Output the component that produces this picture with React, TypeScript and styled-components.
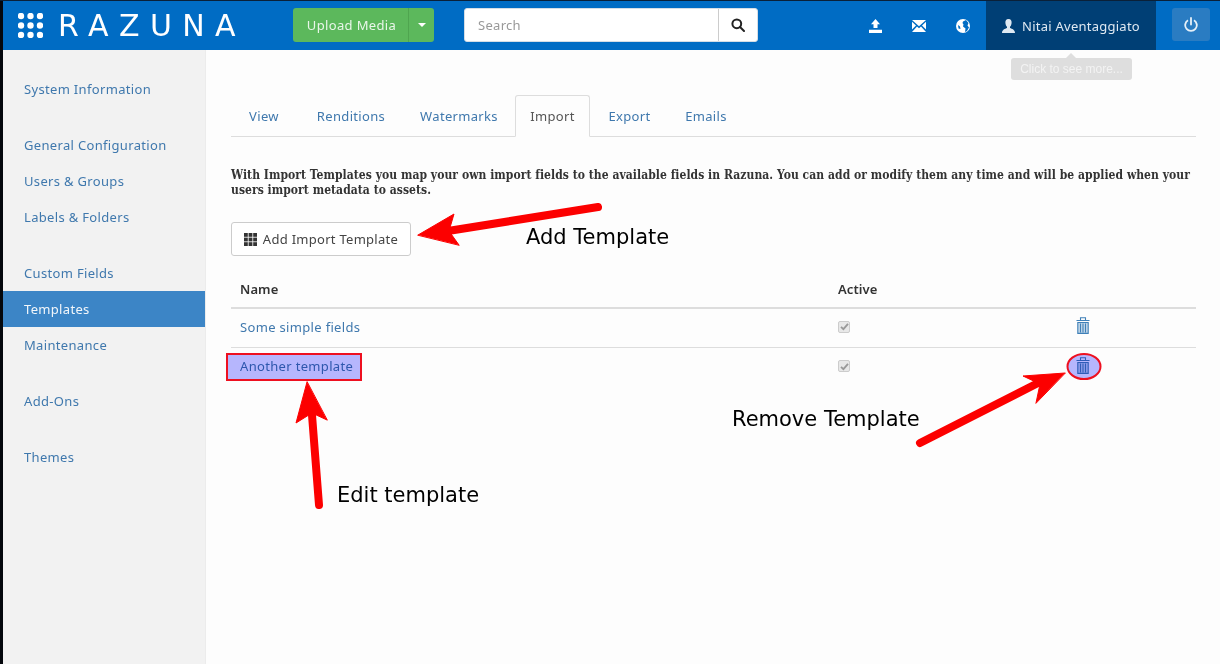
import React from 'react';
import styled, { createGlobalStyle } from 'styled-components';

const Global = createGlobalStyle`
  html, body { margin: 0; padding: 0; background: #000; }
  body { font-family: "Noto Sans", "Open Sans", sans-serif; font-size: 13px; }
  * { box-sizing: border-box; }
`;
const Page = styled.div`
  position: relative; width: 1220px; height: 664px; overflow: hidden;
  display: flex; flex-direction: column; padding-left: 3px; padding-top: 1px;
  background: linear-gradient(#0a2038 1px, #04070c 1px);
`;
const Header = styled.header`
  height: 49px; flex: none; background: #006cc4; display: flex; align-items: flex-start;
`;
const Brand = styled.div`
  width: 290px; height: 49px; display: flex; align-items: center; gap: 15px; padding-left: 15px; flex: none;
`;
const Wordmark = styled.span`
  color: #fff; font-family: "DejaVu Sans", sans-serif; font-size: 30px; font-weight: 400; letter-spacing: 10.4px; line-height: 1;
`;
const UploadGroup = styled.div`
  margin-top: 7px; width: 141px; height: 34px; display: flex; background: #5cb85c; border-radius: 3px; color: #e9f6e9; flex: none;
`;
const UploadLabel = styled.span`
  width: 116px; display: flex; align-items: center; justify-content: center; padding-left: 2px; letter-spacing: .35px; font-size: 13px;
  border-right: 1px solid #4fa54f;
`;
const Caret = styled.span`
  flex: 1; display: flex; align-items: center; justify-content: center;
  &::after { content: ""; border: 4px solid transparent; border-top-color: #fff; border-bottom: 0; }
`;
const Search = styled.div`
  margin: 7px 0 0 30px; width: 294px; height: 34px; background: #fff; border-radius: 3px; border: 1px solid #d5dde5; display: flex; flex: none;
`;
const SearchInput = styled.span`
  flex: 1; padding-left: 13px; color: #999; display: flex; align-items: center; letter-spacing: .3px;
`;
const SearchBtn = styled.span`
  width: 39px; border-left: 1px solid #ccc; display: flex; align-items: center; justify-content: center; color: #222;
`;
const HeaderIcons = styled.div`
  margin-left: 111px; width: 117px; height: 49px; display: flex; align-items: center; color: #fff; gap: 30px; flex: none;
`;
const User = styled.div`
  width: 170px; height: 49px; background: #003f75; color: #dfe9f2; display: flex; align-items: center; justify-content: center; gap: 7px; flex: none;
  font-size: 13px; letter-spacing: .25px;
`;
const PowerBtn = styled.div`
  margin: 7px 0 0 16px; width: 38px; height: 33px; background: #2a7cc2; border-radius: 3px; display: flex; align-items: center; justify-content: center; color: #e6f0f8; flex: none;
`;
const Body = styled.div`
  flex: 1; display: flex; min-height: 0; background: #fdfdfd;
`;
const Sidebar = styled.nav`
  width: 203px; flex: none; background: #f2f2f2; border-right: 1px solid #ececec; padding-top: 21px; display: flex; flex-direction: column; gap: 20px;
`;
const NavGroup = styled.div`display: flex; flex-direction: column;`;
const NavItem = styled.a<{ $active?: boolean }>`
  height: 36px; line-height: 36px; padding-left: 21px; letter-spacing: .33px; font-size: 13px;
  color: ${p => (p.$active ? '#f2f6fa' : '#3f78ad')};
  background: ${p => (p.$active ? '#3c85c6' : 'transparent')};
`;
const Main = styled.main`
  flex: 1; padding: 45px 24px 0 25px; min-width: 0;
`;
const Tabs = styled.div`
  display: flex; height: 42px; border-bottom: 1px solid #ddd; gap: 2px;
`;
const Tab = styled.a<{ $active?: boolean; $w: number }>`
  width: ${p => p.$w}px; height: 42px; text-align: center; line-height: 40px; letter-spacing: .33px; border: 1px solid ${p => (p.$active ? '#ddd' : 'transparent')};
  border-bottom-color: ${p => (p.$active ? '#fdfdfd' : 'transparent')}; border-radius: 3px 3px 0 0;
  color: ${p => (p.$active ? '#555' : '#3f78ad')}; background: ${p => (p.$active ? '#fdfdfd' : 'transparent')};
`;
const Intro = styled.p`
  margin: 31px 0 0; font-family: "DejaVu Serif", serif; font-stretch: condensed; font-weight: 700; font-size: 12px; line-height: 15px; letter-spacing: .05px; color: #333;
`;
const AddButton = styled.button`
  margin-top: 24px; width: 180px; height: 34px; background: #fff; border: 1px solid #ccc; border-radius: 3px; color: #444; font: inherit; font-size: 13px; letter-spacing: .28px;
  display: flex; align-items: center; justify-content: center; gap: 6px; padding: 0;
`;
const Table = styled.div`margin-top: 15px;`;
const Row = styled.div<{ $head?: boolean }>`
  display: grid; grid-template-columns: 598px 238px 1fr; align-items: center; padding-left: 9px;
  height: ${p => (p.$head ? '38px' : '39px')};
  border-bottom: ${p => (p.$head ? '2px solid #ddd' : '1px solid #ddd')};
  padding-bottom: ${p => (p.$head ? '0' : '3px')};
  &:last-child { border-bottom: none; }
`;
const HeadCell = styled.span`font-weight: 600; font-size: 13px; color: #333; letter-spacing: .1px;`;
const NameLink = styled.a`color: #3f78ad; letter-spacing: .33px;`;
const Check = styled.span`
  width: 12px; height: 12px; border: 1px solid #ccc; border-radius: 2px; background: #e8e8e8; display: flex; align-items: center; justify-content: center; color: #999;
`;
const TrashCell = styled.span`color: #3f80b8; display: flex; margin-top: -2px;`;
const Tooltip = styled.div`
  position: absolute; left: 1011px; top: 58px; width: 121px; height: 22px; background: #dedede; border-radius: 3px; color: #f3f3f3;
  font: 12px/22px "Liberation Sans", sans-serif; text-align: center;
  &::before { content: ""; position: absolute; left: 55px; top: -5px; border: 5px solid transparent; border-top: 0; border-bottom-color: #dedede; }
`;
const Overlay = styled.svg`position: absolute; left: 0; top: 0; pointer-events: none; mix-blend-mode: multiply;`;
const Note = styled.span<{ $x: number; $y: number }>`
  position: absolute; left: ${p => p.$x}px; top: ${p => p.$y}px; font: 21px/24px "DejaVu Sans", sans-serif; color: #000; white-space: nowrap;
`;

const Dots = () => (
  <svg width="25" height="25" viewBox="0 0 25 25" fill="#fff">
    {[3, 12.5, 22].flatMap(y => [3, 12.5, 22].map(x => <circle key={`${x}-${y}`} cx={x} cy={y} r="3.2" />))}
  </svg>
);
const Grid = () => (
  <svg width="13" height="13" viewBox="0 0 13 13" fill="#333">
    {[0, 4.6, 9.2].flatMap(y => [0, 4.6, 9.2].map(x => <rect key={`${x}-${y}`} x={x} y={y} width="3.8" height="3.8" />))}
  </svg>
);
const Trash = () => (
  <svg width="14" height="17" viewBox="0 0 14 17" fill="none" stroke="currentColor" strokeWidth="1.1">
    <path d="M.5 3.500h13M4.500 3.200V.8h5v2.400" />
    <path d="M1.800 5.500h10.400V16.400H1.800z" fill="currentColor" fillOpacity=".3" />
    <path d="M4.500 6.500v9M7 6.500v9M9.500 6.500v9" />
  </svg>
);
const Tick = () => (
  <svg width="9" height="9" viewBox="0 0 9 9"><path d="M1 4.800l2.400 2.400L8 1.800" fill="none" stroke="currentColor" strokeWidth="1.8" /></svg>
);

export default function App() {
  return (
    <Page>
      <Global />
      <Header>
        <Brand><Dots /><Wordmark>RAZUNA</Wordmark></Brand>
        <UploadGroup><UploadLabel>Upload Media</UploadLabel><Caret /></UploadGroup>
        <Search>
          <SearchInput>Search</SearchInput>
          <SearchBtn>
            <svg width="14" height="14" viewBox="0 0 14 14" fill="none" stroke="currentColor" strokeWidth="2"><circle cx="5.800" cy="5.800" r="4.400" /><path d="M9 9l4 4" strokeLinecap="round" /></svg>
          </SearchBtn>
        </Search>
        <HeaderIcons>
          <svg width="13" height="14" viewBox="0 0 13 14" fill="currentColor"><path d="M6.500 0l4.500 5.200H8.500V9h-4V5.200H2zM0 10.800h13V14H0z" /></svg>
          <svg width="14" height="12" viewBox="0 0 14 12" fill="currentColor"><path d="M0 0h14L7 6.200zM0 1.800l4 3.700-4 4zM14 1.800l-4 3.700 4 4zM5 6.400l2 1.800 2-1.800L14 12H0z" /></svg>
          <svg width="14" height="14" viewBox="0 0 14 14"><circle cx="7" cy="7" r="7" fill="currentColor" /><path d="M7 2.500l3-1.500 2.500 3-1 2.500 1.500 2-2 3.500-2 1 .5-3.500-2.500-2 .5-2-1-1.500zM2 6l2 1.500.5 2.500L2.500 9.500z" fill="#006cc4" /></svg>
        </HeaderIcons>
        <User>
          <svg width="13" height="14" viewBox="0 0 13 14" fill="currentColor"><path d="M6.500 0C9 0 9.800 2 9.600 4 9.400 6 8.600 7.200 8 7.800V9c2 .8 5 1.600 5 5H0c0-3.400 3-4.200 5-5V7.800C4.400 7.200 3.600 6 3.400 4 3.200 2 4 0 6.500 0z" /></svg>
          Nitai Aventaggiato
        </User>
        <PowerBtn>
          <svg width="14" height="15" viewBox="0 0 14 15" fill="none" stroke="currentColor" strokeWidth="1.800"><path d="M7 1v6.500" strokeLinecap="round" /><path d="M4 3.200a5.800 5.800 0 1 0 6 0" /></svg>
        </PowerBtn>
      </Header>
      <Body>
        <Sidebar>
          <NavGroup><NavItem>System Information</NavItem></NavGroup>
          <NavGroup>
            <NavItem>General Configuration</NavItem>
            <NavItem>Users &amp; Groups</NavItem>
            <NavItem>Labels &amp; Folders</NavItem>
          </NavGroup>
          <NavGroup>
            <NavItem>Custom Fields</NavItem>
            <NavItem $active>Templates</NavItem>
            <NavItem>Maintenance</NavItem>
          </NavGroup>
          <NavGroup><NavItem>Add-Ons</NavItem></NavGroup>
          <NavGroup><NavItem>Themes</NavItem></NavGroup>
        </Sidebar>
        <Main>
          <Tabs>
            <Tab $w={66}>View</Tab>
            <Tab $w={104}>Renditions</Tab>
            <Tab $w={108}>Watermarks</Tab>
            <Tab $w={75} $active>Import</Tab>
            <Tab $w={75}>Export</Tab>
            <Tab $w={74}>Emails</Tab>
          </Tabs>
          <Intro>With Import Templates you map your own import fields to the available fields in Razuna. You can add or modify them any time and will be applied when your users import metadata to assets.</Intro>
          <AddButton><Grid />Add Import Template</AddButton>
          <Table>
            <Row $head><HeadCell>Name</HeadCell><HeadCell>Active</HeadCell><span /></Row>
            <Row><NameLink>Some simple fields</NameLink><Check><Tick /></Check><TrashCell><Trash /></TrashCell></Row>
            <Row><NameLink>Another template</NameLink><Check><Tick /></Check><TrashCell><Trash /></TrashCell></Row>
          </Table>
        </Main>
      </Body>
      <Tooltip>Click to see more...</Tooltip>
      <Overlay width="1220" height="664" viewBox="0 0 1220 664">
        <rect x="227" y="354" width="134" height="26" fill="#b8b8ff" stroke="#f01020" strokeWidth="2" />
        <ellipse cx="1084" cy="366.500" rx="16.500" ry="12.500" fill="#b8b8ff" stroke="#f01020" strokeWidth="2" />
        <g fill="#fe0000" stroke="#fe0000" strokeLinecap="round">
          <path d="M598 207L448 231" strokeWidth="8" fill="none" />
          <path d="M418 235L454 214L449 231L459 245Z" strokeWidth="1" />
          <path d="M319 505L312 415" strokeWidth="8" fill="none" />
          <path d="M307 382L296 423L312 413L327 420Z" strokeWidth="1" />
          <path d="M920 443L1040 382" strokeWidth="8" fill="none" />
          <path d="M1065 373L1023 376L1040 384L1036 403Z" strokeWidth="1" />
        </g>
      </Overlay>
      <Note $x={526} $y={225}>Add Template</Note>
      <Note $x={732} $y={407}>Remove Template</Note>
      <Note $x={337} $y={483}>Edit template</Note>
    </Page>
  );
}
